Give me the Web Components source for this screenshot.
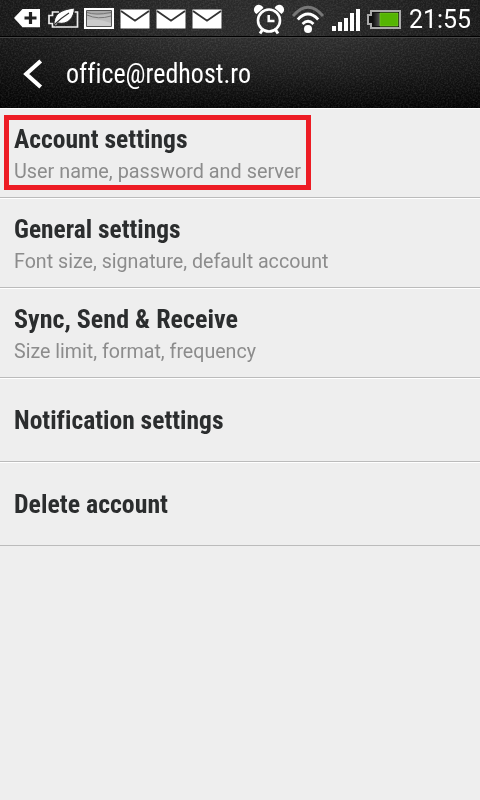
<!DOCTYPE html>
<html lang="en">
<head>
<meta charset="utf-8">
<title>Account</title>
<style>
html, body { margin: 0; height: 100%; background: #eee; }
</style>
</head>
<body>
<mail-settings></mail-settings>
<script>
const define = (name, html, ready) => {
  const t = document.createElement('template');
  t.innerHTML = html;
  customElements.define(name, class extends HTMLElement {
    constructor() {
      super();
      this.attachShadow({ mode: 'open' }).append(t.content.cloneNode(true));
    }
    connectedCallback() { if (ready) ready(this); }
  });
};

// A single line of text, condensed horizontally to the given width.
define('fit-text', `
<style>:host{display:block;white-space:nowrap}span{display:inline-block;transform-origin:0 50%;font-variant-ligatures:none}</style>
<span><slot></slot></span>`, el => {
  const s = el.shadowRoot.querySelector('span');
  requestAnimationFrame(() => {
    const w = s.getBoundingClientRect().width;
    if (w) s.style.transform = 'scaleX(' + (+el.getAttribute('width') / w) + ')';
  });
});

// Fine leather-like grain behind the dark bars.
define('bar-grain', `
<style>:host{position:absolute;inset:0;opacity:.3}svg{display:block;width:100%;height:100%}</style>
<svg><filter id="n" x="0" y="0" width="100%" height="100%"><feTurbulence type="fractalNoise" baseFrequency=".6" numOctaves="2"/><feColorMatrix values="0 0 0 0 1  0 0 0 0 1  0 0 0 0 1  .7 0 0 0 -.26"/></filter>
<rect width="100%" height="100%" filter="url(#n)"/></svg>`);

define('status-bar', `
<style>
:host{display:flex;box-sizing:border-box;height:37px;background:linear-gradient(90deg,#171717,#282828 35%,#2b2b2b 60%,#191919);border-bottom:1px solid #000;position:relative}
svg{display:block;flex:none;position:relative}
fit-text{width:60px;margin-left:7px;color:#fff;font:25px/36px Roboto,sans-serif;padding-top:2px;height:34px;position:relative}
</style>
<bar-grain></bar-grain>
<svg width="402" height="36" viewBox="0 0 402 36">
  <defs>
    <linearGradient id="b" x2="1"><stop stop-color="#111"/><stop offset="1" stop-color="#555"/></linearGradient>
  </defs>
  <path d="M14 18 22.500 9H40V27.300H22.500Z" fill="#fff"/>
  <path d="M30.500 12v12M24.500 18h12" stroke="#222" stroke-width="3.200"/>
  <path d="M59 12H52.500V15.500h-3.500v8h3.500v3.500h25V12h-3" fill="none" stroke="#eee" stroke-width="1.700"/>
  <path d="M54 25C54 15 59 10 74.500 8C74 18 68 25 58 23L56 26Z" fill="#fff" stroke="#292929" stroke-width="1"/>
  <path d="M54 25Q61 18 69 13" fill="none" stroke="#333" stroke-width="1.200"/>
  <path d="M84 8h30v21H84z" fill="#fff"/><path d="M86.500 10.500h25v16h-25z" fill="#bcbcbc" stroke="#555"/>
  <path d="M87 11h24v3l-12 1-12-2z" fill="#aaa"/><path d="M87 12.500q8 3 24 0M87 15q11 5 24 1" fill="none" stroke="#777"/><path d="M87 20q12-2 24 3v3H87z" fill="#ccc"/>
  <g fill="#fff"><path d="M120.500 9.500h29v19h-29zM156.500 9.500h29v19h-29zM192.500 9.500h29v19h-29z"/></g>
  <path d="M121 11 135 20.700 149 11M157 11 171 20.700 185 11M193 11 207 20.700 221 11" fill="none" stroke="#333" stroke-width="1.900"/>
  <g fill="none" stroke="#fff">
    <circle cx="269" cy="20.500" r="11" stroke-width="2.600"/>
    <path d="M268.700 15v6h5.800" stroke-width="2.500"/>
    <path d="M263 29 260 33.500M275 29 278 33.500" stroke-width="3"/>
  </g>
  <path d="M256.500 14a4.900 4.900 0 1 1 6.900-6ZM281.500 14a4.900 4.900 0 1 0-6.900-6Z" fill="#fff"/>
  <circle cx="308" cy="29" r="4" fill="#fff"/>
  <g fill="none" stroke="#fff" stroke-width="2.800">
    <path d="M293 16Q308-1.500 323 16" stroke="#777"/>
    <path d="M297.800 19.500Q308 8.500 318.200 19.500"/>
    <path d="M302.500 24Q308 18.500 313.500 24"/>
  </g>
  <path d="M332 26h4v5h-4zM338 22h4v9h-4zM344 18h4v13h-4zM350 13h4v18h-4zM356 9h4v22h-4z" fill="#fff"/>
  <path d="M371 11h29v17h-29v-4h-3v-9h3Z" fill="#111" stroke="#aaa" stroke-width="2"/>
  <path d="M373 13h7v13h-7z" fill="url(#b)"/>
  <path d="M380 13h18v13h-18z" fill="#55b503" stroke="#79c92b" stroke-width=".7"/>
</svg>
<fit-text width="62">21:55</fit-text>`);

define('title-bar', `
<style>
:host{display:flex;position:relative;box-sizing:border-box;height:71px;border-top:1px solid #444;padding-left:23px;color:#fff;background:linear-gradient(90deg,#0007,transparent 38%,transparent 70%,#0005),linear-gradient(#2e2e2e,#1d1d1d 50%,#0a0a0a 90%,#050505)}
svg{width:21px;height:30px;margin-top:21px;flex:none;position:relative}
fit-text{position:relative;margin:20px 0 0 22px;font:27px/32px "Roboto Condensed",Roboto,sans-serif;font-stretch:75%}
</style>
<bar-grain></bar-grain>
<svg viewBox="0 0 21 30"><path d="M17.700 2 3.200 15 17.700 28" fill="none" stroke="#fff" stroke-width="4.100"/></svg>
<fit-text width="185"><slot></slot></fit-text>`);

define('setting-row', `
<style>
:host{display:block;box-sizing:border-box;height:90px;padding:15px 14px 0;border-top:1px solid #fff;border-bottom:1px solid #bbb;position:relative}
:host([single]){height:84px;padding-top:26px}
.t{font:bold 26.700px/30px "Roboto Condensed",Roboto,sans-serif;font-stretch:75%;color:#2b2d2e}
.s{font:20.500px/26px Roboto,sans-serif;color:#8c8c8c;margin-top:4px}
:host([single]) .s{display:none}
i{display:none}
:host([marked]) i{display:block;position:absolute;left:4px;top:6px;width:297px;height:65px;border:5px solid #ed1c24}
</style>
<fit-text class="t"><slot></slot></fit-text>
<fit-text class="s"><slot name="detail"></slot></fit-text><i></i>`, el => {
  el.shadowRoot.querySelector('.t').setAttribute('width', el.getAttribute('title-width'));
  el.shadowRoot.querySelector('.s').setAttribute('width', el.getAttribute('detail-width') || 1);
});

define('mail-settings', `
<style>:host{display:flex;flex-direction:column;height:800px;width:480px;overflow:hidden;background:#eee}</style>
<status-bar></status-bar>
<title-bar>office@redhost.ro</title-bar>
<setting-row marked title-width="173.500" detail-width="287">Account settings<span slot="detail">User name, password and server</span></setting-row>
<setting-row title-width="166.500" detail-width="314.500">General settings<span slot="detail">Font size, signature, default account</span></setting-row>
<setting-row title-width="224" detail-width="242">Sync, Send &amp; Receive<span slot="detail">Size limit, format, frequency</span></setting-row>
<setting-row single title-width="209.500">Notification settings</setting-row>
<setting-row single title-width="154">Delete account</setting-row>`);
</script>
</body>
</html>
